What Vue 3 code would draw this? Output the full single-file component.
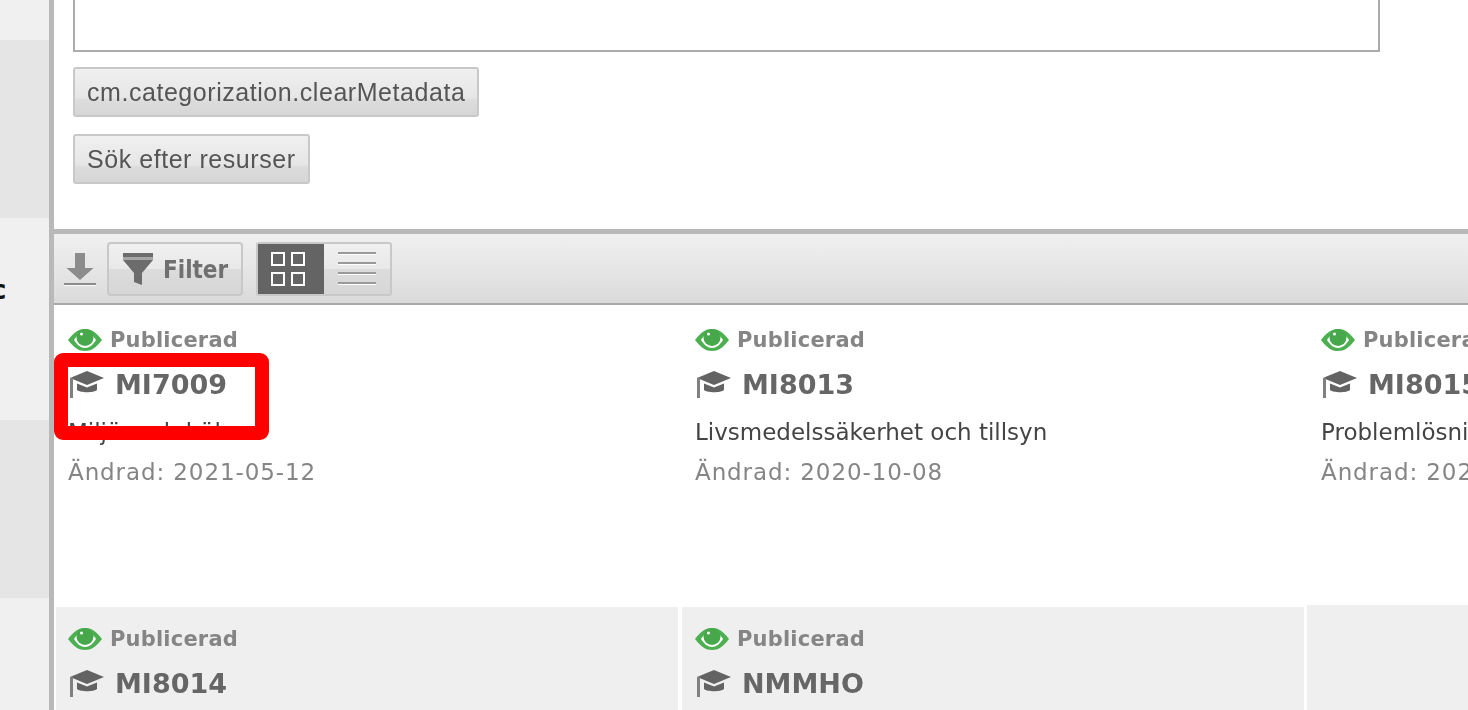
<template>
  <div class="page">
    <aside class="sidebar">
      <div class="side-row light"></div>
      <div class="side-row dark tall"></div>
      <div class="side-row light taller"><span class="side-text">c</span></div>
      <div class="side-row dark tall"></div>
      <div class="side-row light rest"></div>
    </aside>

    <main class="main">
      <section class="search">
        <div class="textbox"></div>
        <button class="btn">cm.categorization.clearMetadata</button>
        <button class="btn">Sök efter resurser</button>
      </section>

      <div class="toolbar">
        <svg class="download" viewBox="0 0 32 34" width="32" height="34">
          <path d="M11 0h10v15h8.500L16 27 2.500 15H11z" fill="#8c8c8c" />
          <rect x="0" y="30" width="32" height="2" fill="#8c8c8c" />
          <rect x="0" y="32" width="32" height="1" fill="#fafafa" />
        </svg>
        <button class="tool">
          <svg viewBox="0 0 30 32" width="30" height="32">
            <path d="M0 0h30v7L19 20v12l-8-3V20L0 7z" fill="#6c6c6c" />
            <rect x="0" y="4" width="30" height="3" fill="#a6a6a6" />
          </svg>
          <span>Filter</span>
        </button>
        <div class="view-switch">
          <div class="view active">
            <svg viewBox="0 0 34 34" width="34" height="34" fill="none" stroke="#fff" stroke-width="2">
              <rect x="1" y="1" width="12" height="12" />
              <rect x="21" y="1" width="12" height="12" />
              <rect x="1" y="21" width="12" height="12" />
              <rect x="21" y="21" width="12" height="12" />
            </svg>
          </div>
          <div class="view">
            <svg viewBox="0 0 38 34" width="38" height="34">
              <path d="M0 1h38M0 11h38M0 21h38M0 31h38" stroke="#9a9a9a" stroke-width="2" />
              <path d="M0 2.500h38M0 12.500h38M0 22.500h38M0 32.500h38" stroke="#fff" stroke-width="1" />
            </svg>
          </div>
        </div>
      </div>

      <div class="grid">
        <article v-for="item in items" :key="item.code" class="card" :class="{ shaded: item.shaded, blank: !item.code }">
          <template v-if="item.code">
            <div class="status">
              <svg viewBox="0 0 34 22" width="34" height="22">
                <path d="M0 11C6 3 11 0 17 0s11 3 17 11c-6 8-11 11-17 11S6 19 0 11z" fill="#4caf50" />
                <path d="M6 11c3-5 7-7 11-7s8 2 11 7c-3 5-7 8-11 8S9 16 6 11z" fill="#fff" />
                <circle cx="17" cy="8.500" r="8.500" fill="#46a84b" />
                <circle cx="13.500" cy="5" r="1.500" fill="#fff" />
              </svg>
              <span>Publicerad</span>
            </div>
            <div class="code">
              <svg viewBox="0 0 36 28" width="36" height="28">
                <path d="M19 1 36 8 19 15 2 8z" fill="#636363" />
                <path d="M9 13.500 19 17.500 29 13.500V20c-3 3-17 3-20 0z" fill="#636363" />
                <path d="M3.500 8V28" stroke="#808080" stroke-width="3" />
              </svg>
              <span>{{ item.code }}</span>
            </div>
            <div v-if="item.title" class="title">{{ item.title }}</div>
            <div v-if="item.changed" class="changed">Ändrad: {{ item.changed }}</div>
          </template>
        </article>
      </div>
    </main>

    <div class="highlight"></div>
  </div>
</template>

<script setup>
const items = [
  { code: 'MI7009', title: 'Miljö- och hälsa', changed: '2021-05-12' },
  { code: 'MI8013', title: 'Livsmedelssäkerhet och tillsyn', changed: '2020-10-08' },
  { code: 'MI8015', title: 'Problemlösning i miljöarbetet', changed: '2021-03-17' },
  { code: 'MI8014', shaded: true },
  { code: 'NMMHO', shaded: true },
  { code: '', shaded: true }
]
</script>

<style>
html,
body {
  margin: 0;
  background: #fff;
  overflow: hidden;
}
</style>

<style scoped>
.page {
  position: relative;
  display: flex;
  width: 1468px;
  height: 710px;
  overflow: hidden;
  font-family: "DejaVu Sans", sans-serif;
  filter: blur(0.75px);
}

.sidebar {
  width: 49px;
  flex-shrink: 0;
  display: flex;
  flex-direction: column;
  border-right: 5px solid #b9b9b9;
  overflow: hidden;
}

.side-row {
  height: 40px;
  flex-shrink: 0;
}
.side-row.light { background: #f0f0f0; }
.side-row.dark { background: #e5e5e5; }
.side-row.tall { height: 178px; }
.side-row.taller { height: 202px; }
.side-row.rest { flex: 1; }

.side-text {
  display: block;
  margin-left: -9px;
  padding-top: 57px;
  font-size: 26px;
  font-weight: bold;
  line-height: 30px;
  color: #111;
}

.main {
  flex: 1;
  min-width: 0;
  display: flex;
  flex-direction: column;
}

.search {
  height: 229px;
  flex-shrink: 0;
  padding-left: 19px;
  display: flex;
  flex-direction: column;
  align-items: flex-start;
  box-sizing: border-box;
}

.textbox {
  width: 1307px;
  height: 52px;
  flex-shrink: 0;
  box-sizing: border-box;
  border: 2px solid #ababab;
  border-top: 0;
  margin-bottom: 15px;
}

.btn {
  height: 50px;
  padding: 0 12px;
  margin-bottom: 17px;
  border: 2px solid #c8c8c8;
  border-radius: 3px;
  background: linear-gradient(#f0f0f0, #e6e6e6 62%, #dcdcdc 68%, #d6d6d6);
  font-family: "Liberation Sans", Arial, sans-serif;
  font-size: 25px;
  letter-spacing: 0.55px;
  color: #555;
}

.toolbar {
  height: 76px;
  flex-shrink: 0;
  box-sizing: border-box;
  display: flex;
  align-items: center;
  padding-left: 10px;
  border-top: 5px solid #b9b9b9;
  border-bottom: 2px solid #a8a8a8;
  background: linear-gradient(#f0f0f0, #e4e4e4 60%, #dadada);
}

.download {
  margin-right: 11px;
  margin-top: 3px;
}

.tool {
  height: 54px;
  display: flex;
  align-items: center;
  gap: 10px;
  padding: 0 13px 0 14px;
  border: 2px solid #c8c8c8;
  border-radius: 4px;
  background: linear-gradient(#f0f0f0, #e8e8e8 50%, #dcdcdc 51%, #d6d6d6);
  font-family: "DejaVu Sans Condensed", "DejaVu Sans", sans-serif;
  font-weight: bold;
  font-size: 24px;
  color: #707070;
}

.tool span {
  padding-top: 3px;
}

.view-switch {
  display: flex;
  height: 54px;
  margin-left: 13px;
  box-sizing: border-box;
  border: 2px solid #c8c8c8;
  border-radius: 3px;
  background: linear-gradient(#f0f0f0, #e8e8e8 50%, #dcdcdc 51%, #d6d6d6);
}

.view {
  width: 66px;
  display: flex;
  align-items: center;
  justify-content: center;
}
.view.active {
  background: #646464;
  padding-right: 6px;
  width: 60px;
}

.grid {
  display: grid;
  grid-template-columns: 622px 622px 622px;
  column-gap: 4px;
  grid-template-rows: 302px 1fr;
  padding-left: 2px;
  flex: 1;
}

.card {
  padding: 21px 12px 0;
  overflow: hidden;
}
.card:nth-child(3n+2),
.card:nth-child(3n+3) {
  padding-left: 13px;
}
.card.shaded {
  padding-top: 18px;
  background: #efefef;
}
.card.blank {
  margin: -2px 0 0 -1px;
}

.status {
  display: flex;
  align-items: center;
  gap: 8px;
  height: 28px;
  font-weight: bold;
  font-size: 21px;
  letter-spacing: 0.2px;
  color: #858585;
  white-space: nowrap;
}

.code {
  display: flex;
  align-items: center;
  gap: 11px;
  height: 30px;
  margin-top: 15px;
  font-weight: bold;
  font-size: 27px;
  color: #666;
  white-space: nowrap;
}

.title {
  margin-top: 20px;
  font-size: 23px;
  line-height: 26px;
  color: #444;
  white-space: nowrap;
}

.changed {
  margin-top: 14px;
  font-size: 23px;
  letter-spacing: 0.9px;
  line-height: 26px;
  color: #858585;
  white-space: nowrap;
}

/* annotation drawn over the screenshot */
.highlight {
  position: absolute;
  left: 54px;
  top: 353px;
  width: 215px;
  height: 87px;
  box-sizing: border-box;
  border: 14px solid #ff0000;
  border-radius: 9px;
}
</style>
